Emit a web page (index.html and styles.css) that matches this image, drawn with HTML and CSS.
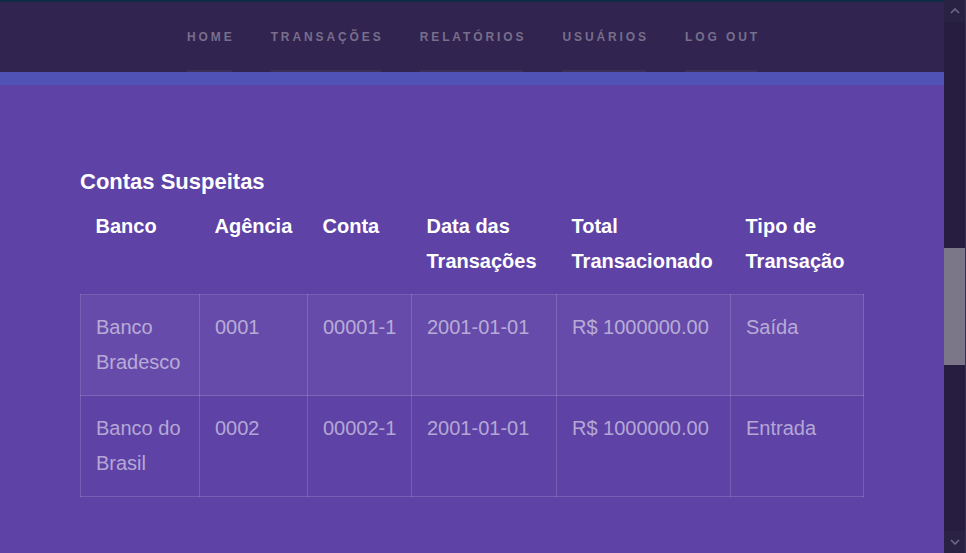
FILE: index.html
```html
<!DOCTYPE html>
<html lang="pt-BR">
<head>
<meta charset="utf-8">
<title>Contas Suspeitas</title>
<link rel="stylesheet" href="styles.css">
</head>
<body>
<div class="page">
  <div class="main">
    <header class="header">
      <nav class="nav">
        <a class="nav-link" href="#">Home</a>
        <a class="nav-link" href="#">Transações</a>
        <a class="nav-link" href="#">Relatórios</a>
        <a class="nav-link" href="#">Usuários</a>
        <a class="nav-link" href="#">Log out</a>
      </nav>
    </header>
    <div class="stripe"></div>
    <section class="content">
      <h3 class="title">Contas Suspeitas</h3>
      <table class="table">
        <colgroup>
          <col class="c1"><col class="c2"><col class="c3"><col class="c4"><col class="c5"><col class="c6">
        </colgroup>
        <thead>
          <tr>
            <th>Banco</th>
            <th>Agência</th>
            <th>Conta</th>
            <th>Data das Transações</th>
            <th>Total Transacionado</th>
            <th>Tipo de Transação</th>
          </tr>
        </thead>
        <tbody>
          <tr class="odd">
            <td>Banco Bradesco</td>
            <td class="nowrap">0001</td>
            <td class="nowrap">00001-1</td>
            <td class="nowrap">2001-01-01</td>
            <td class="nowrap">R$ 1000000.00</td>
            <td>Saída</td>
          </tr>
          <tr>
            <td>Banco do Brasil</td>
            <td class="nowrap">0002</td>
            <td class="nowrap">00002-1</td>
            <td class="nowrap">2001-01-01</td>
            <td class="nowrap">R$ 1000000.00</td>
            <td>Entrada</td>
          </tr>
        </tbody>
      </table>
    </section>
  </div>
  <div class="scrollbar">
    <div class="sb-btn">
      <svg width="10" height="6" viewBox="0 0 10 6"><polyline points="1,5 5,1 9,5" fill="none" stroke="#6f6a84" stroke-width="1.6"/></svg>
    </div>
    <div class="sb-track"><div class="sb-thumb"></div></div>
    <div class="sb-btn">
      <svg width="10" height="6" viewBox="0 0 10 6"><polyline points="1,1 5,5 9,1" fill="none" stroke="#6f6a84" stroke-width="1.6"/></svg>
    </div>
  </div>
</div>
</body>
</html>
```

FILE: styles.css
```css
html, body {
  margin: 0;
  padding: 0;
}

body {
  background: #5e42a6;
  font-family: "Liberation Sans", Arial, Helvetica, sans-serif;
  color: rgba(255, 255, 255, 0.55);
}

.page {
  display: flex;
  height: 553px;
  overflow: hidden;
}

.main {
  flex: 1;
  display: flex;
  flex-direction: column;
  min-width: 0;
}

.header {
  background: #312450;
  border-top: 2px solid #0f2b45;
  height: 70px;
}

.nav {
  display: flex;
  justify-content: center;
  gap: 39px;
  height: 100%;
}

.nav-link {
  display: flex;
  flex-direction: column;
  height: 100%;
  box-sizing: border-box;
  padding-top: 28px;
  margin-right: -3px;
  font-size: 12px;
  line-height: 14px;
  font-weight: bold;
  letter-spacing: 2.9px;
  text-transform: uppercase;
  text-decoration: none;
  color: rgba(255, 255, 255, 0.35);
}

.nav-link::after {
  content: "";
  display: block;
  margin-top: auto;
  margin-right: 3px;
  height: 2px;
  background: rgba(255, 255, 255, 0.05);
}

.stripe {
  height: 13px;
  background: #5052b5;
}

.content {
  padding: 80px 0 0 80px;
}

.title {
  margin: 0 0 11px;
  font-size: 22px;
  line-height: 33px;
  font-weight: bold;
  color: #ffffff;
}

.table {
  width: 783px;
  table-layout: fixed;
  border-collapse: collapse;
  font-size: 20px;
  line-height: 35px;
}

.c1 { width: 119px; }
.c2 { width: 108px; }
.c3 { width: 104px; }
.c4 { width: 145px; }
.c5 { width: 174px; }
.c6 { width: 133px; }

.table th {
  padding: 0 15px 15px;
  text-align: left;
  vertical-align: top;
  font-weight: bold;
  color: #ffffff;
}

.table td {
  padding: 15px;
  vertical-align: top;
  border: 1px solid rgba(255, 255, 255, 0.15);
  color: rgba(255, 255, 255, 0.55);
}

.table td.nowrap {
  white-space: nowrap;
}

.table tr.odd td {
  background: rgba(255, 255, 255, 0.05);
}

.scrollbar {
  width: 22px;
  flex: none;
  display: flex;
  flex-direction: column;
  background: #261d40;
  border-right: 1px solid #3a3350;
  box-sizing: border-box;
}

.sb-btn {
  height: 22px;
  display: flex;
  align-items: center;
  justify-content: center;
  background: #2a2243;
}

.sb-track {
  flex: 1;
}

.sb-thumb {
  margin-top: 226px;
  height: 117px;
  background: #7c7689;
}
```
